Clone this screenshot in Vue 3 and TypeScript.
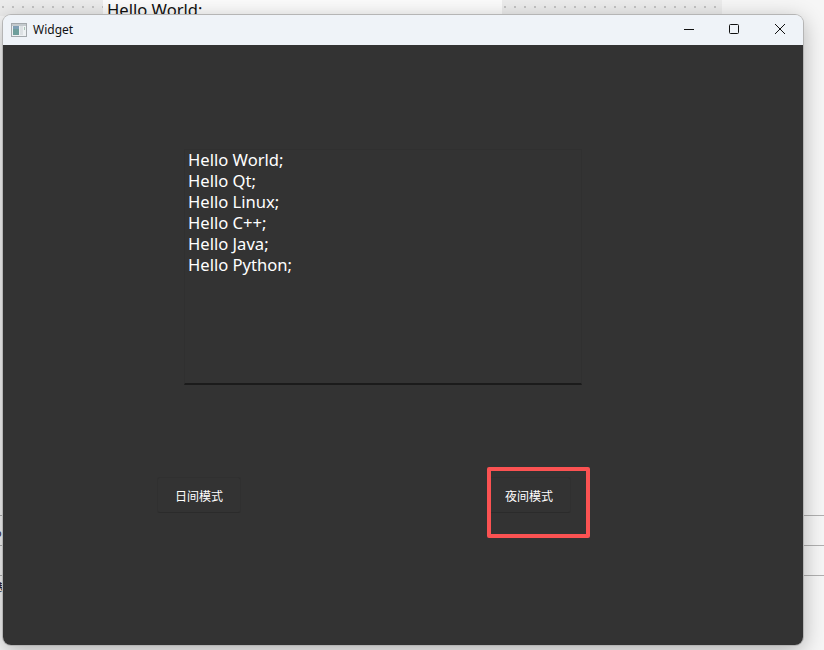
<script setup lang="ts">
const lines: string[] = ['Hello World;', 'Hello Qt;', 'Hello Linux;', 'Hello C++;', 'Hello Java;', 'Hello Python;']
</script>

<template>
  <div class="desktop">
    <div class="bg-top">
      <div class="dots left"></div>
      <div class="doc">Hello World;</div>
      <div class="dots right"></div>
    </div>
    <div class="rule r1"></div>
    <div class="rule r2"></div>
    <div class="rule r3"></div>
    <span class="edge e1">o</span>
    <span class="edge e2">表</span>

    <div class="window">
      <header class="titlebar">
        <svg class="app-icon" width="16" height="14" viewBox="0 0 16 14">
          <rect x="0.5" y="0.5" width="15" height="13" fill="#eef1f3" stroke="#a3a8ac" />
          <rect x="1" y="1" width="14" height="2" fill="#c4cace" />
          <rect x="2" y="3" width="6" height="9" fill="#6f9f9c" />
          <rect x="2" y="3" width="6" height="3" fill="#7f9fb5" />
          <rect x="9" y="3" width="3" height="9" fill="#dde1e4" />
          <rect x="13" y="4" width="1" height="3" fill="#a8c4b6" />
        </svg>
        <span class="title">Widget</span>
        <div class="controls">
          <button class="ctl" aria-label="Minimize">
            <svg width="12" height="12" viewBox="0 0 12 12"><path d="M2 6.5H12" stroke="#111" stroke-width="1" fill="none" /></svg>
          </button>
          <button class="ctl" aria-label="Maximize">
            <svg width="12" height="12" viewBox="0 0 12 12"><rect x="1.5" y="1.5" width="9" height="9" rx="1" stroke="#111" stroke-width="1" fill="none" /></svg>
          </button>
          <button class="ctl" aria-label="Close">
            <svg width="12" height="12" viewBox="0 0 12 12"><path d="M1 1L11 11M11 1L1 11" stroke="#111" stroke-width="1" fill="none" /></svg>
          </button>
        </div>
      </header>
      <main class="content">
        <div class="editor">
          <div class="lines">
            <div v-for="line in lines" :key="line" class="line">{{ line }}</div>
          </div>
        </div>
        <div class="actions">
          <button class="mode">日间模式</button>
          <button class="mode">夜间模式</button>
        </div>
      </main>
    </div>

    <div class="highlight"></div>
  </div>
</template>

<style>
html, body { margin: 0; padding: 0; background: #fff; }
</style>

<style scoped>
.desktop {
  position: relative;
  width: 824px;
  height: 650px;
  overflow: hidden;
  background: #f6f6f6;
  font-family: "Noto Sans", "Noto Sans CJK SC", sans-serif;
}
.bg-top {
  display: flex;
  height: 16px;
}
.dots {
  background-color: #ececec;
  background-image: radial-gradient(circle at 1px 1px, #b4b4b4 0.6px, transparent 1px);
  background-size: 10px 10px;
  background-position: 2px 6px;
}
.dots.left { width: 103px; }
.dots.right { width: 220px; }
.doc {
  width: 399px;
  background: #fbfbfb;
  font-size: 16.6px;
  line-height: 20px;
  padding-left: 4px;
  color: #111;
  box-sizing: border-box;
}
.rule {
  position: absolute;
  left: 0;
  width: 824px;
  height: 1px;
  background: #b0b0b0;
}
.r1 { top: 515px; }
.r2 { top: 545px; }
.r3 { top: 575px; }
.edge {
  position: absolute;
  left: -5px;
  font-size: 11px;
  line-height: 14px;
  color: #223;
}
.e1 { top: 526px; }
.e2 { top: 581px; }
.window {
  position: absolute;
  left: 3px;
  top: 15px;
  width: 800px;
  height: 630px;
  display: flex;
  flex-direction: column;
  border-radius: 8px;
  overflow: hidden;
  box-shadow: 0 0 0 1px #b5b5b5, 0 5px 22px rgba(0, 0, 0, 0.3);
}
.titlebar {
  height: 30px;
  flex: none;
  display: flex;
  align-items: center;
  background: #eff3f8;
  padding-left: 8px;
}
.app-icon { flex: none; margin-bottom: 1px; }
.title {
  margin-left: 6px;
  margin-bottom: 2px;
  font-size: 12px;
  color: #111;
}
.controls {
  margin-left: auto;
  display: flex;
  margin-bottom: 2px;
}
.ctl {
  width: 46px;
  height: 30px;
  padding: 0;
  border: 0;
  background: transparent;
  display: flex;
  align-items: center;
  justify-content: center;
}
.content {
  flex: 1;
  background: #333333;
  padding-top: 104px;
  box-sizing: border-box;
}
.editor {
  width: 398px;
  height: 236px;
  margin-left: 181px;
  box-sizing: border-box;
  border: 1px solid #303030;
  border-bottom: 2px solid #1b1b1b;
  padding: 0 3px;
  color: #fff;
  font-size: 16.6px;
  line-height: 21px;
}
.lines { margin-top: -1px; }
.line { white-space: pre; }
.actions {
  display: flex;
  gap: 246px;
  margin-top: 92px;
  padding-left: 154px;
}
.mode {
  width: 84px;
  height: 36px;
  padding: 0;
  background: #333333;
  border: 1px solid #303030;
  border-bottom-color: #2b2b2b;
  border-radius: 3px;
  color: #fff;
  font-family: "Noto Sans CJK SC", sans-serif;
  font-size: 12px;
}
.highlight {
  position: absolute;
  left: 487px;
  top: 467px;
  width: 103px;
  height: 71px;
  box-sizing: border-box;
  border: 4px solid #fb5252;
  border-radius: 2px;
}
</style>
